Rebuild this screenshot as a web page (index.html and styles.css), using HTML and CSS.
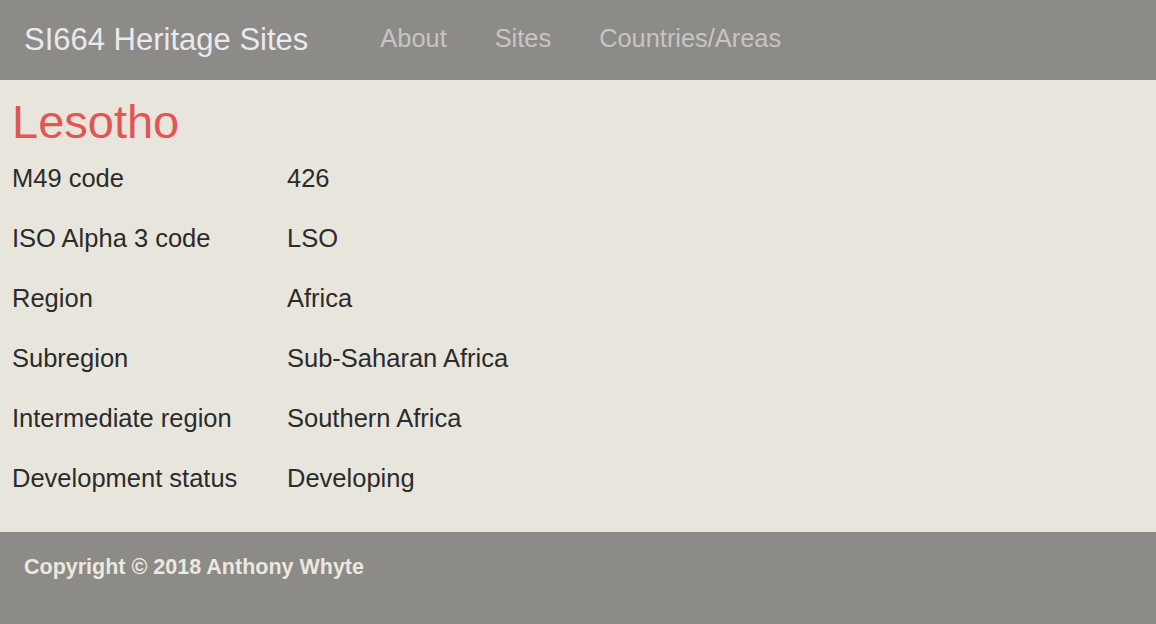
FILE: index.html
```html
<!DOCTYPE html>
<html lang="en">
<head>
<meta charset="utf-8">
<title>Lesotho</title>
<link rel="stylesheet" href="styles.css">
</head>
<body>
<header class="navbar">
  <a class="brand" href="#">SI664 Heritage Sites</a>
  <nav class="nav">
    <a href="#">About</a>
    <a href="#">Sites</a>
    <a href="#">Countries/Areas</a>
  </nav>
</header>
<main class="content">
  <h1 class="title">Lesotho</h1>
  <dl class="facts">
    <dt>M49 code</dt><dd>426</dd>
    <dt>ISO Alpha 3 code</dt><dd>LSO</dd>
    <dt>Region</dt><dd>Africa</dd>
    <dt>Subregion</dt><dd>Sub-Saharan Africa</dd>
    <dt>Intermediate region</dt><dd>Southern Africa</dd>
    <dt>Development status</dt><dd>Developing</dd>
  </dl>
</main>
<footer class="footer">
  <p>Copyright © 2018 Anthony Whyte</p>
</footer>
</body>
</html>
```
FILE: styles.css
```css
* { box-sizing: border-box; }
html, body {
  margin: 0;
  padding: 0;
  height: 100%;
}
body {
  font-family: "Liberation Sans", Arial, sans-serif;
  background: #e8e6dc;
  color: #2b2b2b;
  display: flex;
  flex-direction: column;
}
.navbar {
  height: 80px;
  flex: none;
  background: #8c8b87;
  display: flex;
  align-items: center;
  padding: 0 24px;
}
.brand {
  color: #e9e9ee;
  font-size: 31px;
  text-decoration: none;
}
.nav {
  display: flex;
  gap: 48px;
  margin-left: 72px;
  margin-top: -4px;
}
.nav a {
  color: #c6c5c3;
  font-size: 25.4px;
  text-decoration: none;
}
.content {
  flex: 1;
  padding: 0 12px;
}
.title {
  color: #e35454;
  font-weight: normal;
  font-size: 47px;
  line-height: 1;
  margin: 18px 0 0 0;
}
.facts {
  display: grid;
  grid-template-columns: 275px auto;
  margin: 3px 0 0 0;
  font-size: 25.5px;
  line-height: 60px;
}
.facts dt, .facts dd { margin: 0; }
.footer {
  height: 92px;
  flex: none;
  background: #8c8b87;
  padding: 0 24px;
  display: flex;
  align-items: center;
}
.footer p {
  margin: 0 0 22px;
  color: #ebe8de;
  font-size: 21.5px;
  font-weight: bold;
}
```
